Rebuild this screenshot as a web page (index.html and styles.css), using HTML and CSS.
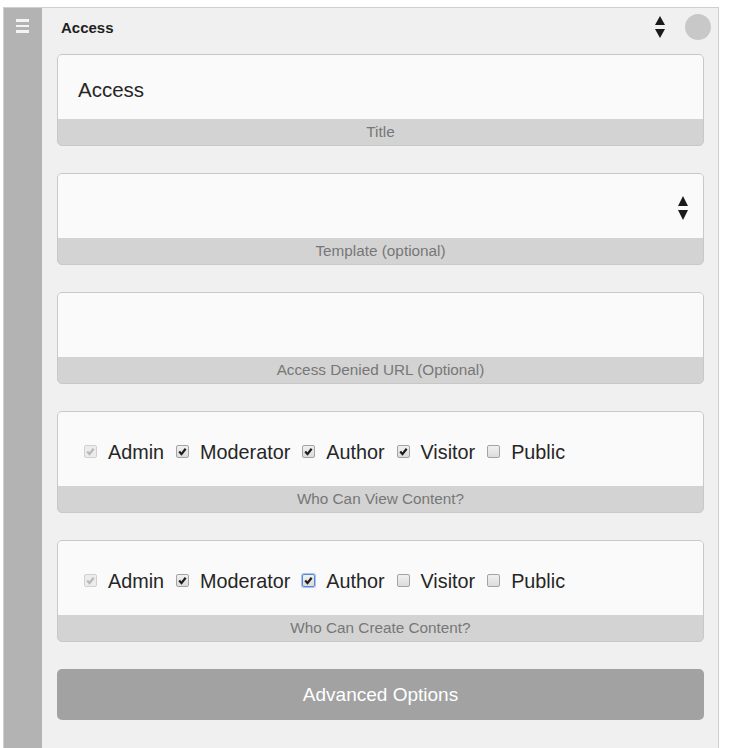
FILE: index.html
```
<!DOCTYPE html>
<html>
<head>
<meta charset="utf-8">
<link rel="stylesheet" href="styles.css">
</head>
<body>
<div class="panel">
  <div class="sidebar">
    <div class="burger"><span></span><span></span><span></span></div>
  </div>
  <div class="main">
    <div class="header">
      <span class="htitle">Access</span>
      <svg class="sort" width="10" height="22" viewBox="0 0 10 22"><path d="M5 0 L10 9 L0 9 Z M0 13 L10 13 L5 22 Z" fill="#1a1a1a"/></svg>
      <span class="dot"></span>
    </div>
    <div class="cards">
      <div class="card">
        <div class="field"><span class="value">Access</span></div>
        <div class="label">Title</div>
      </div>
      <div class="card">
        <div class="field select">
          <svg class="sort" width="10" height="24" viewBox="0 0 10 24"><path d="M5 0 L10 10 L0 10 Z M0 14 L10 14 L5 24 Z" fill="#1a1a1a"/></svg>
        </div>
        <div class="label">Template (optional)</div>
      </div>
      <div class="card">
        <div class="field"></div>
        <div class="label">Access Denied URL (Optional)</div>
      </div>
      <div class="card">
        <div class="field checks">
          <span class="opt"><span class="cb disabled checked"><svg viewBox="0 0 13 13"><path d="M2.6 6.6 L5.3 9.6 L10.2 3.2"/></svg></span>Admin</span>
          <span class="opt"><span class="cb checked"><svg viewBox="0 0 13 13"><path d="M2.6 6.6 L5.3 9.6 L10.2 3.2"/></svg></span>Moderator</span>
          <span class="opt"><span class="cb checked"><svg viewBox="0 0 13 13"><path d="M2.6 6.6 L5.3 9.6 L10.2 3.2"/></svg></span>Author</span>
          <span class="opt"><span class="cb checked"><svg viewBox="0 0 13 13"><path d="M2.6 6.6 L5.3 9.6 L10.2 3.2"/></svg></span>Visitor</span>
          <span class="opt"><span class="cb"></span>Public</span>
        </div>
        <div class="label">Who Can View Content?</div>
      </div>
      <div class="card">
        <div class="field checks">
          <span class="opt"><span class="cb disabled checked"><svg viewBox="0 0 13 13"><path d="M2.6 6.6 L5.3 9.6 L10.2 3.2"/></svg></span>Admin</span>
          <span class="opt"><span class="cb checked"><svg viewBox="0 0 13 13"><path d="M2.6 6.6 L5.3 9.6 L10.2 3.2"/></svg></span>Moderator</span>
          <span class="opt"><span class="cb checked focus"><svg viewBox="0 0 13 13"><path d="M2.6 6.6 L5.3 9.6 L10.2 3.2"/></svg></span>Author</span>
          <span class="opt"><span class="cb"></span>Visitor</span>
          <span class="opt"><span class="cb"></span>Public</span>
        </div>
        <div class="label">Who Can Create Content?</div>
      </div>
      <div class="button">Advanced Options</div>
    </div>
  </div>
</div>
</body>
</html>
```

FILE: styles.css
```
html, body {
  margin: 0;
  padding: 0;
  background: #ffffff;
  font-family: "Liberation Sans", Arial, sans-serif;
  color: #222;
}
.panel {
  margin: 7px 0 0 3px;
  width: 714px;
  height: 760px;
  border: 1px solid #cfcfcf;
  border-bottom: none;
  display: flex;
}
.sidebar {
  width: 38px;
  flex: none;
  background: #b3b3b3;
}
.burger {
  margin: 11px 0 0 12px;
  width: 13px;
  display: flex;
  flex-direction: column;
  gap: 3px;
}
.burger span {
  display: block;
  height: 2.5px;
  background: #f4f4f4;
}
.main {
  flex: 1;
  background: #f0f0f0;
  padding: 0 14px 0 15px;
}
.header {
  height: 38px;
  display: flex;
  align-items: center;
  padding: 0 7px 0 4px;
  margin-right: -14px;
}
.htitle {
  font-weight: bold;
  font-size: 15px;
  color: #1e1e1e;
  flex: 1;
}
.header .sort {
  margin-right: 20px;
}
.dot {
  width: 26px;
  height: 26px;
  border-radius: 50%;
  background: #c8c8c8;
}
.cards {
  padding-top: 8px;
  display: flex;
  flex-direction: column;
  gap: 27px;
}
.card {
  border: 1px solid #c8c8c8;
  border-radius: 5px;
  overflow: hidden;
  background: #d3d3d3;
}
.field {
  height: 64px;
  background: #fafafa;
  display: flex;
  align-items: center;
  padding: 5px 20px 0 20px;
  box-sizing: border-box;
}
.value {
  font-size: 20.5px;
  color: #262626;
}
.select {
  justify-content: flex-end;
  padding: 3px 15px 0 20px;
}
.label {
  height: 26px;
  line-height: 26px;
  text-align: center;
  font-size: 15.3px;
  color: #777;
}
.checks {
  height: 74px;
  padding: 6px 0 0 26px;
  gap: 12px;
}
.opt {
  display: flex;
  align-items: center;
  gap: 11px;
  font-size: 19.8px;
  color: #262626;
}
.cb {
  width: 13px;
  height: 13px;
  box-sizing: border-box;
  border: 1px solid #a3a3a3;
  border-radius: 2px;
  background: linear-gradient(#f0f0f0, #dcdcdc);
  display: block;
  position: relative;
  top: -1px;
}
.cb svg {
  display: block;
  width: 11px;
  height: 11px;
}
.cb svg path {
  fill: none;
  stroke: #1e1e1e;
  stroke-width: 2.6;
}
.cb.disabled {
  border-color: #d0d0d0;
  background: #ececec;
}
.cb.disabled svg path {
  stroke: #b8b8b8;
}
.cb.focus {
  border-color: #5b88d8;
  box-shadow: 0 0 0 1px #a9c1ec;
}
.button {
  height: 51px;
  border-radius: 5px;
  background: #a2a2a2;
  color: #fff;
  font-size: 19px;
  display: flex;
  align-items: center;
  justify-content: center;
}
```
